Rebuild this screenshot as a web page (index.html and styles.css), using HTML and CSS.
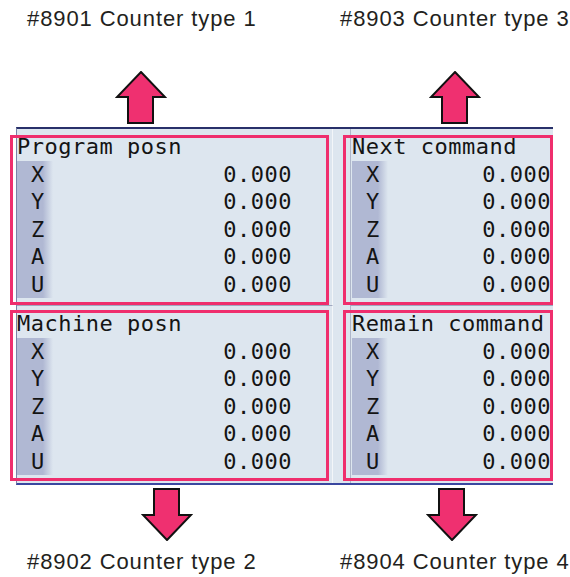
FILE: index.html
```html
<!DOCTYPE html>
<html lang="en">
<head>
    <meta charset="UTF-8">
    <meta name="viewport" content="width=device-width, initial-scale=1.0">
    <title>Counter types</title>
    <link rel="stylesheet" href="styles.css">
</head>
<body>
    <div class="page">
        <div class="captions top">
            <span>#8901 Counter type 1</span>
            <span>#8903 Counter type 3</span>
        </div>

        <div class="arrows top">
            <svg class="arrow" width="52" height="55" viewBox="0 0 52 55"><path d="M26 1 L50 26 L38 26 L38 52 L13 52 L13 26 L2 26 Z"/></svg>
            <svg class="arrow" width="52" height="55" viewBox="0 0 52 55"><path d="M26 1 L50 26 L38 26 L38 52 L13 52 L13 26 L2 26 Z"/></svg>
        </div>

        <div class="screen">
            <section class="panel left upper">
                <div class="title">Program posn</div>
                <div class="row"><span class="axis">X</span><span class="value">0.000</span></div>
                <div class="row"><span class="axis">Y</span><span class="value">0.000</span></div>
                <div class="row"><span class="axis">Z</span><span class="value">0.000</span></div>
                <div class="row"><span class="axis">A</span><span class="value">0.000</span></div>
                <div class="row"><span class="axis">U</span><span class="value">0.000</span></div>
            </section>
            <section class="panel right upper">
                <div class="title">Next command</div>
                <div class="row"><span class="axis">X</span><span class="value">0.000</span></div>
                <div class="row"><span class="axis">Y</span><span class="value">0.000</span></div>
                <div class="row"><span class="axis">Z</span><span class="value">0.000</span></div>
                <div class="row"><span class="axis">A</span><span class="value">0.000</span></div>
                <div class="row"><span class="axis">U</span><span class="value">0.000</span></div>
            </section>
            <section class="panel left lower">
                <div class="title">Machine posn</div>
                <div class="row"><span class="axis">X</span><span class="value">0.000</span></div>
                <div class="row"><span class="axis">Y</span><span class="value">0.000</span></div>
                <div class="row"><span class="axis">Z</span><span class="value">0.000</span></div>
                <div class="row"><span class="axis">A</span><span class="value">0.000</span></div>
                <div class="row"><span class="axis">U</span><span class="value">0.000</span></div>
            </section>
            <section class="panel right lower">
                <div class="title">Remain command</div>
                <div class="row"><span class="axis">X</span><span class="value">0.000</span></div>
                <div class="row"><span class="axis">Y</span><span class="value">0.000</span></div>
                <div class="row"><span class="axis">Z</span><span class="value">0.000</span></div>
                <div class="row"><span class="axis">A</span><span class="value">0.000</span></div>
                <div class="row"><span class="axis">U</span><span class="value">0.000</span></div>
            </section>
        </div>

        <div class="arrows bottom">
            <svg class="arrow" width="52" height="55" viewBox="0 0 52 55"><path d="M26 54 L50 29 L38 29 L38 3 L13 3 L13 29 L2 29 Z"/></svg>
            <svg class="arrow" width="52" height="55" viewBox="0 0 52 55"><path d="M26 54 L50 29 L38 29 L38 3 L13 3 L13 29 L2 29 Z"/></svg>
        </div>

        <div class="captions bottom">
            <span>#8902 Counter type 2</span>
            <span>#8904 Counter type 4</span>
        </div>
    </div>
</body>
</html>
```

FILE: styles.css
```css
body {
    margin: 0;
    background-color: #fff;
    font-family: "Liberation Sans", Arial, sans-serif;
}

.page {
    width: 570px;
    height: 577px;
    overflow: hidden;
}

/* captions above and below */
.captions {
    display: grid;
    grid-template-columns: 313px auto;
    padding-left: 27px;
    font-size: 22px;
    letter-spacing: 0.9px;
    line-height: 28px;
    color: #231f20;
}

.captions.top {
    height: 40px;
    padding-top: 5px;
    box-sizing: border-box;
}

.captions.bottom {
    margin-top: 5px;
}

/* pink arrows */
.arrows {
    display: flex;
}

.arrows.top {
    height: 87px;
    padding-top: 31px;
    padding-left: 115px;
    gap: 262px;
    box-sizing: border-box;
}

.arrows.bottom {
    height: 58px;
    padding-top: 1px;
    padding-left: 141px;
    gap: 233px;
    box-sizing: border-box;
}

.arrow path {
    fill: #ef3070;
    stroke: #111;
    stroke-width: 2;
    stroke-linejoin: miter;
}

/* the screen */
.screen {
    margin-left: 16px;
    width: 536px;
    height: 354px;
    display: grid;
    grid-template-columns: 316px 203px;
    grid-template-rows: 177px 177px;
    column-gap: 17px;
    background-color: #dde6ef;
    border-top: 2px solid #28306a;
    border-bottom: 2px solid #3a47a0;
    border-left: 1px solid #7a82a8;
    font-family: "DejaVu Sans Mono", monospace;
    font-size: 22px;
    letter-spacing: 0.5px;
    color: #141414;
}

.panel {
    position: relative;
    padding-top: 4px;
    box-sizing: border-box;
}

.panel.upper {
    border-bottom: 1px solid #a0a8c0;
}

.panel.left {
    border-right: 1px solid #f3f6f9;
}

.panel.right {
    border-left: 1px solid #aeb6c9;
    padding-left: 1px;
    padding-right: 2px;
}

.panel.left .row {
    padding-right: 40px;
}

.title {
    height: 27.5px;
    line-height: 27.5px;
    white-space: nowrap;
}

.row {
    display: flex;
    justify-content: space-between;
    height: 27.5px;
    line-height: 27.5px;
}

.axis {
    width: 36px;
    padding-left: 14px;
    box-sizing: border-box;
    background: linear-gradient(to right, #b0b8d3 72%, #dde6ef);
}

/* pink annotation frames */
.panel::after {
    content: "";
    position: absolute;
    border: 3px solid #ef2e6d;
    pointer-events: none;
}

.panel.left.upper::after {
    top: 6px;
    bottom: 0;
    left: -7px;
    right: 3px;
}

.panel.left.lower::after {
    top: 4px;
    bottom: 2px;
    left: -7px;
    right: 3px;
}

.panel.right.upper::after {
    top: 6px;
    bottom: 0;
    left: -8px;
    right: 0;
}

.panel.right.lower::after {
    top: 4px;
    bottom: 2px;
    left: -8px;
    right: 0;
}
```
